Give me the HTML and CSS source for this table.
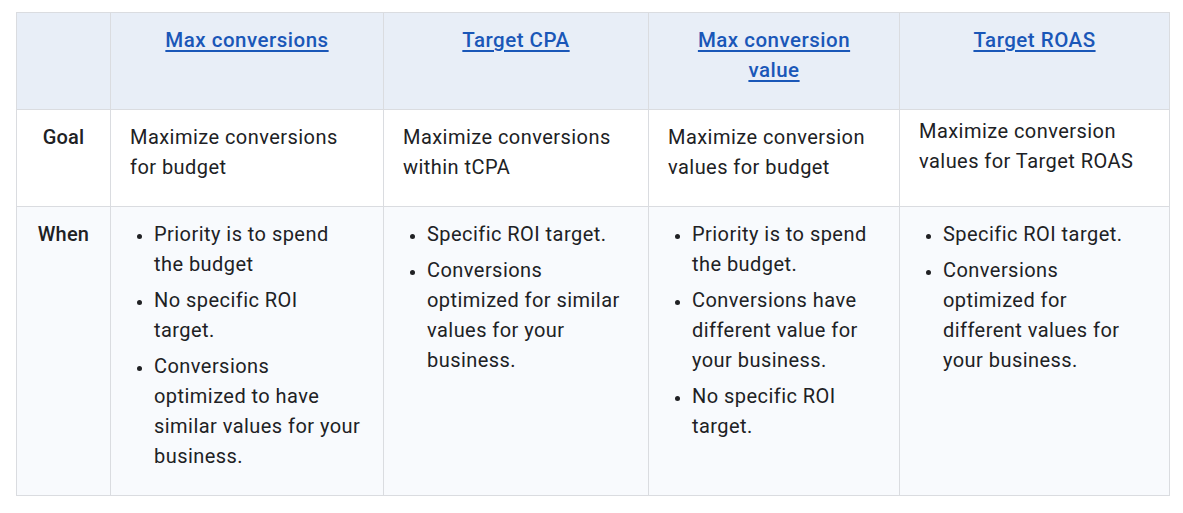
FILE: index.html
```html
<!DOCTYPE html>
<html>
<head>
<meta charset="utf-8">
<link rel="stylesheet" href="styles.css">
</head>
<body>
<table class="cmp">
  <colgroup>
    <col class="c0"><col class="c1"><col class="c2"><col class="c3"><col class="c4">
  </colgroup>
  <thead>
    <tr>
      <th></th>
      <th><a href="#">Max conversions</a></th>
      <th><a href="#">Target CPA</a></th>
      <th><a href="#">Max conversion value</a></th>
      <th><a href="#">Target ROAS</a></th>
    </tr>
  </thead>
  <tbody>
    <tr class="goal">
      <td class="label">Goal</td>
      <td>Maximize conversions for budget</td>
      <td>Maximize conversions within tCPA</td>
      <td>Maximize conversion values for budget</td>
      <td class="raised">Maximize conversion values for Target ROAS</td>
    </tr>
    <tr class="when">
      <td class="label">When</td>
      <td><ul><li>Priority is to spend the budget</li><li>No specific ROI target.</li><li>Conversions optimized to have similar values for your business.</li></ul></td>
      <td><ul><li>Specific ROI target.</li><li>Conversions optimized for similar values for your business.</li></ul></td>
      <td><ul><li>Priority is to spend the budget.</li><li>Conversions have different value for your business.</li><li>No specific ROI target.</li></ul></td>
      <td><ul><li>Specific ROI target.</li><li>Conversions optimized for different values for your business.</li></ul></td>
    </tr>
  </tbody>
</table>
</body>
</html>
```
FILE: styles.css
```css
html, body {
  margin: 0;
  padding: 0;
  background: #ffffff;
}
body {
  padding: 12px 0 0 16px;
  font-family: Roboto, "Noto Sans", Arial, sans-serif;
  font-size: 20px;
  line-height: 30px;
  letter-spacing: 0.45px;
  color: #202124;
}
.cmp {
  border-collapse: collapse;
  table-layout: fixed;
  width: 1153px;
}
.c0 { width: 94px; }
.c1 { width: 273px; }
.c2 { width: 265px; }
.c3 { width: 251px; }
.c4 { width: 270px; }
.cmp th, .cmp td {
  border: 1px solid #dadce0;
  vertical-align: top;
  text-align: left;
}
.cmp th {
  background: #e8eef7;
  text-align: center;
  font-size: 20.5px;
  font-weight: 500;
  letter-spacing: 0.5px;
  padding: 12px 22px 10px;
  height: 74px;
}
.cmp th a {
  color: #1a57b8;
  text-decoration: underline;
  text-underline-offset: 3px;
}
.cmp td {
  padding: 12px 20px 7px 19px;
}
.goal td {
  background: #ffffff;
  height: 77px;
}
.goal td.raised {
  padding-top: 6px;
}
.when td {
  background: #f8fafd;
  height: 269px;
}
.cmp td.label {
  text-align: center;
  font-weight: 500;
  letter-spacing: 0.2px;
  padding-left: 8px;
  padding-right: 8px;
}
.cmp ul {
  margin: 0;
  padding: 0 0 0 24px;
  list-style: disc;
}
.cmp li {
  margin: 0 0 6px;
}
.cmp li::marker {
  font-size: 17px;
}
```
